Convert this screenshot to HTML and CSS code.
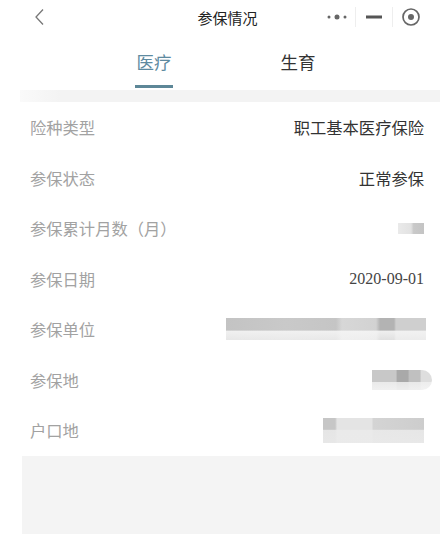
FILE: index.html
```html
<!DOCTYPE html>
<html lang="zh-CN">
<head>
    <meta charset="UTF-8">
    <meta name="viewport" content="width=device-width, initial-scale=1.0">
    <title>参保情况</title>
    <link rel="stylesheet" href="styles.css">
</head>
<body>
    <div class="page">
        <div class="nav-bar">
            <div class="nav-back">
                <svg width="14" height="18" viewBox="0 0 14 18"><path d="M10 1.5 L3 9 L10 16.5" fill="none" stroke="#777" stroke-width="1.3"/></svg>
            </div>
            <div class="nav-title">参保情况</div>
            <div class="capsule">
                <div class="cap-btn">
                    <svg width="22" height="8" viewBox="0 0 22 8"><circle cx="3" cy="4" r="1.5" fill="#666"/><circle cx="11" cy="4" r="2.5" fill="#666"/><circle cx="19" cy="4" r="1.5" fill="#666"/></svg>
                </div>
                <div class="cap-sep"></div>
                <div class="cap-btn">
                    <svg width="16" height="4" viewBox="0 0 16 4"><rect x="0" y="0.5" width="16" height="3" fill="#555"/></svg>
                </div>
                <div class="cap-sep"></div>
                <div class="cap-btn">
                    <svg width="20" height="20" viewBox="0 0 20 20"><circle cx="10" cy="10" r="8" fill="none" stroke="#666" stroke-width="1.7"/><circle cx="10" cy="10" r="3" fill="#666"/></svg>
                </div>
            </div>
        </div>

        <div class="tabs">
            <div class="tab active">医疗</div>
            <div class="tab">生育</div>
        </div>
        <div class="band"></div>

        <div class="info-list">
            <div class="info-row">
                <span class="label">险种类型</span>
                <span class="value">职工基本医疗保险</span>
            </div>
            <div class="info-row">
                <span class="label">参保状态</span>
                <span class="value">正常参保</span>
            </div>
            <div class="info-row">
                <span class="label">参保累计月数（月）</span>
                <span class="blur blur-months"></span>
            </div>
            <div class="info-row">
                <span class="label">参保日期</span>
                <span class="value date">2020-09-01</span>
            </div>
            <div class="info-row">
                <span class="label">参保单位</span>
                <span class="blur blur-unit"></span>
            </div>
            <div class="info-row">
                <span class="label">参保地</span>
                <span class="blur blur-place"></span>
            </div>
            <div class="info-row">
                <span class="label">户口地</span>
                <span class="blur blur-home"></span>
            </div>
        </div>

        <div class="footer-area"></div>
    </div>
</body>
</html>
```

FILE: styles.css
```css
* {
    box-sizing: border-box;
}

body {
    margin: 0;
    background: #fff;
    font-family: "Noto Sans CJK SC", "Noto Sans", sans-serif;
}

.page {
    width: 440px;
    height: 534px;
    display: flex;
    flex-direction: column;
    overflow: hidden;
}

.nav-bar {
    height: 34px;
    display: flex;
    align-items: center;
}

.nav-back {
    width: 80px;
    padding-left: 33px;
    display: flex;
    align-items: center;
}

.nav-title {
    flex: 1;
    text-align: center;
    font-size: 15px;
    color: #222;
    margin-left: 56px;
}

.capsule {
    display: flex;
    align-items: center;
    padding-right: 11px;
}

.cap-btn {
    width: 36px;
    height: 24px;
    display: flex;
    align-items: center;
    justify-content: center;
}

.cap-sep {
    width: 1px;
    height: 20px;
    background: #eeeeee;
}

.tabs {
    height: 56px;
    display: flex;
    padding-left: 82px;
}

.tab {
    width: 144px;
    text-align: center;
    font-size: 17.5px;
    color: #333;
    padding-top: 15px;
    position: relative;
}

.tab.active {
    color: #5e8aa0;
}

.tab.active::after {
    content: "";
    position: absolute;
    left: 53px;
    width: 38px;
    bottom: 2px;
    height: 3px;
    background: #5d8797;
}

.band {
    height: 12px;
    margin-left: 20px;
    background: linear-gradient(90deg, #fafafa 0, #f3f3f3 40px);
}

.info-list {
    padding: 0 16px 0 30px;
}

.info-row {
    height: 50.5px;
    display: flex;
    align-items: center;
    justify-content: space-between;
}

.label {
    font-size: 16.3px;
    color: #a2a2a2;
}

.value {
    font-size: 16.3px;
    color: #333;
}

.date {
    font-family: "Liberation Serif", serif;
    font-size: 16px;
    color: #444;
}

.blur {
    display: block;
}

.blur-months {
    width: 26px;
    height: 11px;
    background: linear-gradient(90deg, #eaeaea 0, #e2e2e2 50%, #c9c9c9 60%, #c4c4c4 100%);
}

.blur-unit {
    width: 200px;
    height: 22px;
    margin-right: -2px;
    background:
        linear-gradient(180deg, rgba(255,255,255,0) 0, rgba(255,255,255,0) 55%, rgba(245,245,245,0.9) 60%, rgba(255,255,255,0.6) 100%),
        linear-gradient(90deg, #c3c3c3 0, #c9c9c9 30%, #c5c5c5 55%, #d7d7d7 58%, #d2d2d2 75%, #b3b3b3 77%, #b3b3b3 84%, #cfcfcf 85%, #cfcfcf 100%);
}

.blur-place {
    width: 60px;
    height: 20px;
    margin-right: -8px;
    border-radius: 0 10px 10px 0;
    background:
        linear-gradient(180deg, rgba(255,255,255,0) 0, rgba(255,255,255,0) 60%, rgba(240,240,240,0.85) 62%, rgba(245,245,245,0.9) 100%),
        linear-gradient(90deg, #c8c8c8 0, #c8c8c8 40%, #a9a9a9 42%, #a9a9a9 60%, #c0c0c0 62%, #c0c0c0 80%, #dedede 82%);
}

.blur-home {
    width: 101px;
    height: 25px;
    background:
        linear-gradient(180deg, rgba(255,255,255,0) 0, rgba(255,255,255,0) 45%, rgba(235,235,235,0.85) 50%, rgba(235,235,235,0.9) 100%),
        linear-gradient(90deg, #c6c6c6 0, #c6c6c6 12%, #e4e4e4 14%, #e4e4e4 48%, #d4d4d4 50%, #cdcdcd 100%);
}

.footer-area {
    flex: 1;
    margin-left: 22px;
    background: #f4f4f4;
}
```
